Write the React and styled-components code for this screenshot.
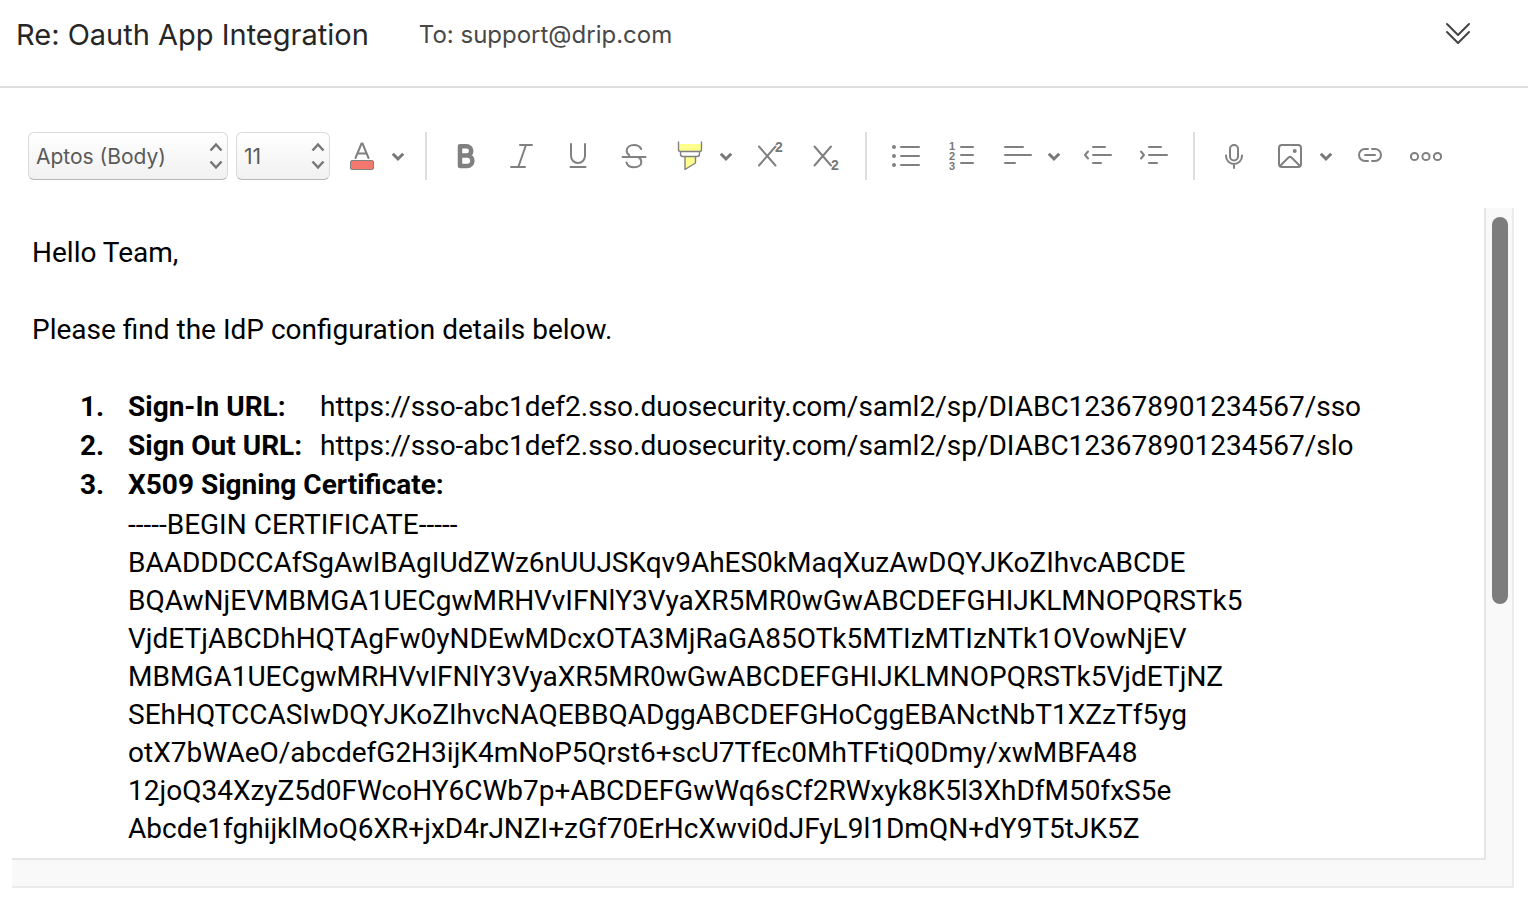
import styled, { createGlobalStyle } from "styled-components"
import { useState } from "react"

const signInUrl = "https://sso-abc1def2.sso.duosecurity.com/saml2/sp/DIABC123678901234567/sso"
const signOutUrl = "https://sso-abc1def2.sso.duosecurity.com/saml2/sp/DIABC123678901234567/slo"

const certificate = [
  "-----BEGIN CERTIFICATE-----",
  "BAADDDCCAfSgAwIBAgIUdZWz6nUUJSKqv9AhES0kMaqXuzAwDQYJKoZIhvcABCDE",
  "BQAwNjEVMBMGA1UECgwMRHVvIFNlY3VyaXR5MR0wGwABCDEFGHIJKLMNOPQRSTk5",
  "VjdETjABCDhHQTAgFw0yNDEwMDcxOTA3MjRaGA85OTk5MTIzMTIzNTk1OVowNjEV",
  "MBMGA1UECgwMRHVvIFNlY3VyaXR5MR0wGwABCDEFGHIJKLMNOPQRSTk5VjdETjNZ",
  "SEhHQTCCASIwDQYJKoZIhvcNAQEBBQADggABCDEFGHoCggEBANctNbT1XZzTf5yg",
  "otX7bWAeO/abcdefG2H3ijK4mNoP5Qrst6+scU7TfEc0MhTFtiQ0Dmy/xwMBFA48",
  "12joQ34XzyZ5d0FWcoHY6CWb7p+ABCDEFGwWq6sCf2RWxyk8K5l3XhDfM50fxS5e",
  "Abcde1fghijklMoQ6XR+jxD4rJNZI+zGf70ErHcXwvi0dJFyL9l1DmQN+dY9T5tJK5Z",
]

function Tool({ label, children }) {
  return (
    <ToolButton type="button" aria-label={label}>
      <Icon viewBox="0 0 32 32">{children}</Icon>
    </ToolButton>
  )
}

function SplitTool({ label, children }) {
  return (
    <Split>
      <Tool label={label}>{children}</Tool>
      <CaretButton type="button" aria-label={`${label} options`}>
        <Caret viewBox="0 0 16 16">
          <path d="M2.8 5.8L8 11L13.2 5.8" />
        </Caret>
      </CaretButton>
    </Split>
  )
}

function Stepper({ label, wide, value, options, onChange }) {
  return (
    <SelectBox $wide={wide}>
      <select aria-label={label} value={value} onChange={(e) => onChange(e.target.value)}>
        {options.map((o) => <option key={o}>{o}</option>)}
      </select>
      <Arrows viewBox="0 0 16 32">
        <path d="M2.5 10.5l5.5-6 5.5 6M2.5 21.5l5.5 6 5.5-6" />
      </Arrows>
    </SelectBox>
  )
}

export default function App() {
  const [font, setFont] = useState("Aptos (Body)")
  const [size, setSize] = useState("11")

  return (
    <Page>
      <GlobalStyle />
      <Header>
        <h1>Re: Oauth App Integration</h1>
        <p>To: support@drip.com</p>
        <ToolButton type="button" aria-label="Expand header">
          <Icon viewBox="0 0 32 32" $dark>
            <path d="M5 5l11 11L27 5M5 13l11 11L27 13" />
          </Icon>
        </ToolButton>
      </Header>

      <Toolbar role="toolbar" aria-label="Formatting">
        <Selects>
          <Stepper label="Font" wide value={font} onChange={setFont} options={["Aptos (Body)", "Arial", "Calibri"]} />
          <Stepper label="Font size" value={size} onChange={setSize} options={["10", "11", "12", "14"]} />
        </Selects>
        <Tools>
          <SplitTool label="Font color">
            <path d="M9.5 18L15.5 3.5H16.5L22.5 18M11.5 13.5H20.5" />
            <rect x="4.5" y="20.5" width="23" height="9" rx="1.5" fill="#f5786e" strokeWidth="1" />
          </SplitTool>
          <Separator />
          <Tool label="Bold">
            <path strokeWidth="4.5" d="M10 6.2h6.5a4.7 4.7 0 0 1 0 9.4H10zM10 15.6h7.2a5.2 5.2 0 0 1 0 10.4H10z" />
          </Tool>
          <Tool label="Italic">
            <path d="M14 5h12M20 5L12.3 27M5 27h14" />
          </Tool>
          <Tool label="Underline">
            <path d="M9 4v12a7 7 0 0 0 14 0V4M8.5 27h15" />
          </Tool>
          <Tool label="Strikethrough">
            <path d="M4.5 17h23M23.2 9C22 6.5 19.5 5 16 5c-4 0-7.3 2.2-7.3 5.6 0 2.2 1 3.6 2.6 4.6M8.5 22.5c.8 3 3.8 4.8 7.5 4.8 4.5 0 7.3-2.2 7.3-5.4 0-2-1-3.8-3-4.9" />
          </Tool>
          <SplitTool label="Highlight">
            <path d="M5 4h22v7H5zM11 17v12l10.5-6.5V17z" fill="#ffff8c" stroke="none" />
            <path strokeWidth="1.4" d="M4.5 2v7.5q0 2 2 2h19q2 0 2-2V2M6.5 11.5v2.5q0 2.5 2.5 2.5h14q2.5 0 2.5-2.5v-2.5M11 16.5v13L21.5 23v-6.5" />
          </SplitTool>
          <Tool label="Superscript">
            <path d="M5 6.5l16.5 19M21.5 6.5L5 25.5" />
            <text x="21" y="12" fontSize="14">2</text>
          </Tool>
          <Tool label="Subscript">
            <path d="M4.5 6.5l16.5 19M21 6.5L4.5 25.5" />
            <text x="21" y="30" fontSize="14">2</text>
          </Tool>
          <Separator />
          <Tool label="Bullets">
            <path d="M11 7h18M11 16h18M11 25h18" />
            <path strokeWidth="4" d="M4 7h0M4 16h0M4 25h0" />
          </Tool>
          <Tool label="Numbering">
            <path d="M15 7h12M15 15h12M15 23h12" />
            <text x="3" y="10" fontSize="11">1</text>
            <text x="3" y="20" fontSize="11">2</text>
            <text x="3" y="30" fontSize="11">3</text>
          </Tool>
          <SplitTool label="Align">
            <path d="M3 7h18M3 15h26M3 23h10" />
          </SplitTool>
          <Tool label="Decrease indent">
            <path d="M11 7h12M11 15h18M11 23h8M6 11.5L3 15l3 3.5" />
          </Tool>
          <Tool label="Increase indent">
            <path d="M11 7h12M11 15h18M11 23h8M3 11.5L6 15l-3 3.5" />
          </Tool>
          <Separator />
          <Tool label="Dictate">
            <rect x="12" y="5" width="8" height="15.5" rx="4" />
            <path d="M8 15.5v.5a8 8 0 0 0 16 0v-.5M16 24v4" />
          </Tool>
          <SplitTool label="Picture">
            <rect x="5" y="5" width="22" height="22" rx="3" />
            <path d="M6 26l8.5-8.5q1.5-1.2 3 0L26 26" />
            <path strokeWidth="4" d="M20.7 11h0" />
          </SplitTool>
          <Tool label="Link">
            <path d="M14 9h-3a6 6 0 0 0 0 12h3M18 9h3a6 6 0 0 1 0 12h-3M11 15h10" />
          </Tool>
          <Tool label="More">
            <circle cx="4.5" cy="16.5" r="3.6" />
            <circle cx="16" cy="16.5" r="3.6" />
            <circle cx="27.5" cy="16.5" r="3.6" />
          </Tool>
        </Tools>
      </Toolbar>

      <Frame>
        <Message role="textbox" aria-multiline="true" aria-label="Message body" contentEditable suppressContentEditableWarning spellCheck={false}>
          <p>Hello Team,</p>
          <p>Please find the IdP configuration details below.</p>
          <ol>
            <Item>
              <strong>Sign-In URL:</strong>
              <span>{signInUrl}</span>
            </Item>
            <Item>
              <strong>Sign Out URL:</strong>
              <span>{signOutUrl}</span>
            </Item>
            <Item>
              <strong>X509 Signing Certificate:</strong>
            </Item>
          </ol>
          <Certificate>
            {certificate.map((line) => <div key={line}>{line}</div>)}
          </Certificate>
        </Message>
        <ScrollTrack>
          <ScrollThumb />
        </ScrollTrack>
        <BottomTrack />
      </Frame>
    </Page>
  )
}

const GlobalStyle = createGlobalStyle`
  * {
    box-sizing: border-box;
  }
  body {
    margin: 0;
    background-color: #fff;
    font-family: Inter, "Liberation Sans", sans-serif;
  }
  h1, p, ol {
    margin: 0;
    padding: 0;
    font-weight: 400;
  }
  button {
    border: none;
    background: none;
    padding: 0;
  }
`
const Page = styled.main`
  min-height: 100vh;
  display: flex;
  flex-direction: column;
`
const Header = styled.header`
  display: flex;
  align-items: center;
  gap: 50px;
  padding: 15px 50px 31px 16px;
  border-bottom: 2px solid #dedede;
  h1 {
    font-size: 29px;
    line-height: 40px;
    color: #262626;
  }
  p {
    flex-grow: 1;
    font-size: 24px;
    line-height: 40px;
    color: #484848;
  }
`
const Toolbar = styled.div`
  display: flex;
  align-items: center;
  gap: 12px;
  padding: 44px 28px 28px;
`
const Selects = styled.div`
  display: flex;
  gap: 8px;
`
const SelectBox = styled.div`
  display: grid;
  align-items: center;
  width: ${(props) => (props.$wide ? "200px" : "94px")};
  select {
    grid-area: 1 / 1;
    appearance: none;
    width: 100%;
    height: 48px;
    padding: 0 28px 0 7px;
    border: 1px solid #dadada;
    border-bottom-color: #b8b8b8;
    border-radius: 6px;
    background: linear-gradient(#fff, #f1f1f1);
    font-family: inherit;
    font-size: 21px;
    color: #5a5a5a;
  }
`
const Arrows = styled.svg`
  grid-area: 1 / 1;
  justify-self: end;
  width: 16px;
  height: 32px;
  margin-right: 4px;
  pointer-events: none;
  fill: none;
  stroke: #777;
  stroke-width: 2.5;
`
const Tools = styled.div`
  display: flex;
  align-items: center;
  gap: 16px;
`
const Split = styled.div`
  display: flex;
  align-items: center;
  gap: 8px;
`
const ToolButton = styled.button`
  display: flex;
  align-items: center;
  justify-content: center;
  width: 40px;
  height: 40px;
`
const Icon = styled.svg`
  width: 32px;
  height: 32px;
  fill: none;
  stroke: ${(props) => (props.$dark ? "#444" : "#808080")};
  stroke-width: 2;
  stroke-linecap: round;
  stroke-linejoin: round;
  text {
    fill: #777;
    stroke: none;
    font-family: "Liberation Sans", sans-serif;
    font-weight: 700;
  }
`
const CaretButton = styled.button`
  display: flex;
  width: 16px;
`
const Caret = styled.svg`
  width: 16px;
  height: 16px;
  fill: none;
  stroke: #777;
  stroke-width: 3;
`
const Separator = styled.div`
  width: 2px;
  height: 48px;
  margin: 0 3px;
  background-color: #dedede;
`
const Frame = styled.section`
  flex-grow: 1;
  display: grid;
  grid-template-columns: 1fr 26px;
  grid-template-rows: 1fr 26px;
  margin: 0 14px 12px 12px;
  border-right: 2px solid #ebebeb;
  border-bottom: 2px solid #ebebeb;
  background-color: #f9f9f9;
`
const Message = styled.div`
  padding: 26px 20px 4px;
  border-right: 2px solid #e5e5e5;
  border-bottom: 2px solid #e5e5e5;
  background-color: #fff;
  color: #000;
  font-family: Roboto, "Liberation Sans", sans-serif;
  font-size: 28px;
  line-height: 38px;
  outline: none;
  p {
    margin-bottom: 39px;
  }
  ol {
    padding-left: 48px;
    list-style: none;
    counter-reset: item;
  }
`
const Item = styled.li`
  display: flex;
  margin-bottom: 1px;
  counter-increment: item;
  &::before {
    content: counter(item) ".";
    width: 48px;
    font-weight: 700;
  }
  strong {
    min-width: 192px;
  }
`
const Certificate = styled.div`
  margin-top: 2px;
  padding-left: 96px;
`
const ScrollTrack = styled.div`
  padding: 9px 4px 9px 6px;
`
const ScrollThumb = styled.div`
  height: 61%;
  border-radius: 8px;
  background-color: #7d7d7d;
`
const BottomTrack = styled.div`
  grid-column: 1 / 3;
`
